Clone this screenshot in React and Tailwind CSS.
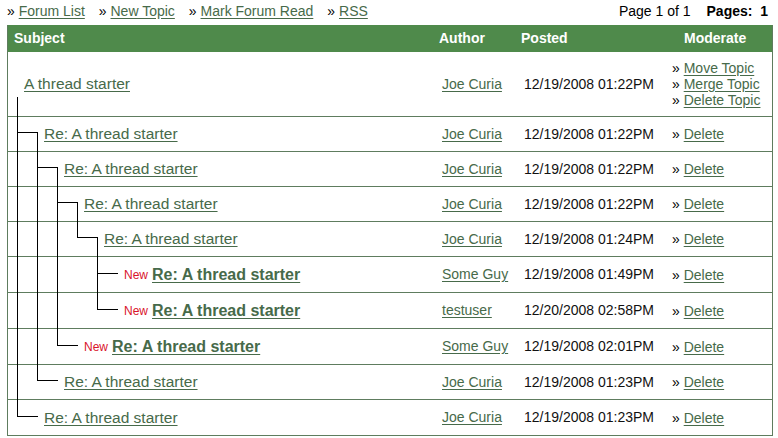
import React from "react";

const posts = [
  { level: 0, title: "A thread starter", author: "Joe Curia", posted: "12/19/2008 01:22PM" },
  { level: 1, title: "Re: A thread starter", author: "Joe Curia", posted: "12/19/2008 01:22PM" },
  { level: 2, title: "Re: A thread starter", author: "Joe Curia", posted: "12/19/2008 01:22PM" },
  { level: 3, title: "Re: A thread starter", author: "Joe Curia", posted: "12/19/2008 01:22PM" },
  { level: 4, title: "Re: A thread starter", author: "Joe Curia", posted: "12/19/2008 01:24PM" },
  { level: 5, title: "Re: A thread starter", author: "Some Guy", posted: "12/19/2008 01:49PM", isNew: true },
  { level: 5, title: "Re: A thread starter", author: "testuser", posted: "12/20/2008 02:58PM", isNew: true },
  { level: 3, title: "Re: A thread starter", author: "Some Guy", posted: "12/19/2008 02:01PM", isNew: true },
  { level: 2, title: "Re: A thread starter", author: "Joe Curia", posted: "12/19/2008 01:23PM" },
  { level: 1, title: "Re: A thread starter", author: "Joe Curia", posted: "12/19/2008 01:23PM" },
];

// does the guide line at depth d keep going below row i?
const continues = (i, d) => {
  for (let j = i + 1; j < posts.length; j++) {
    if (posts[j].level <= d) return false;
    if (posts[j].level === d + 1) return true;
  }
  return false;
};

const linkCls = "text-[#476a4a] underline underline-offset-2";

const TreeLines = ({ i }) => {
  const { level } = posts[i];
  const hasChildren = posts[i + 1] && posts[i + 1].level === level + 1;
  const lines = [];

  for (let d = 0; d < level; d++) {
    const x = 9 + 20 * d;
    const more = continues(i, d);
    if (d < level - 1) {
      if (more)
        lines.push(
          <div key={"v" + d} className="absolute -top-px -bottom-px w-px bg-black" style={{ left: x }} />
        );
    } else {
      lines.push(
        <div
          key={"c" + d}
          className={`absolute -top-px w-px bg-black ${more ? "-bottom-px" : "bottom-[calc(50%+1px)]"}`}
          style={{ left: x }}
        />
      );
      lines.push(
        <div
          key={"h" + d}
          className="absolute top-[calc(50%-2px)] h-px w-[21px] bg-black"
          style={{ left: x }}
        />
      );
    }
  }

  if (hasChildren) {
    lines.push(
      <div
        key="start"
        className={`absolute -bottom-px w-px bg-black ${level === 0 ? "top-[45px]" : "top-[calc(50%-2px)]"}`}
        style={{ left: 9 + 20 * level }}
      />
    );
  }
  return lines;
};

const Row = ({ post, i }) => {
  const height = i === 0 ? "h-[65px]" : post.isNew ? "h-[36px]" : "h-[35px]";
  const last = i === posts.length - 1;
  return (
    <div
      className={`grid grid-cols-[427px_82px_151px_104px] ${height} ${
        last ? "" : "border-b border-[#5e7c5e]"
      }`}
    >
      <div className="relative flex items-center" style={{ paddingLeft: 16 + 20 * post.level }}>
        <TreeLines i={i} />
        {post.isNew && <span className="mr-[4px] text-[12px] text-[#d9142c]">New</span>}
        <a
          href="#"
          className={`${linkCls} ${post.isNew ? "text-[16px] font-bold" : "text-[15.5px]"}`}
        >
          {post.title}
        </a>
      </div>
      <div className="flex items-center pl-[7px]">
        <a href="#" className={linkCls}>
          {post.author}
        </a>
      </div>
      <div className="flex items-center pl-[7px] text-[#111]">{post.posted}</div>
      <div className="flex flex-col justify-center pl-[4px] leading-[16px]">
        {(i === 0 ? ["Move Topic", "Merge Topic", "Delete Topic"] : ["Delete"]).map((label) => (
          <div key={label}>
            » <a href="#" className={linkCls}>{label}</a>
          </div>
        ))}
      </div>
    </div>
  );
};

export default function App() {
  return (
    <div className="h-[438px] w-[778px] bg-white font-['Liberation_Sans',Arial,sans-serif] text-[14px] text-black">
      <div className="flex h-[25px] items-center justify-between pb-[3px] pl-[7px] pr-[10px]">
        <div className="flex gap-[14px]">
          {["Forum List", "New Topic", "Mark Forum Read", "RSS"].map((label) => (
            <span key={label}>
              » <a href="#" className={linkCls}>{label}</a>
            </span>
          ))}
        </div>
        <div className="flex gap-[16px]">
          <span>Page 1 of 1</span>
          <span className="font-bold">Pages:&nbsp; 1</span>
        </div>
      </div>

      <div className="ml-[7px] w-[766px] border-x border-b border-[#5e7c5e]">
        <div className="grid h-[27px] grid-cols-[427px_82px_151px_104px] items-center bg-[#4f8a4b] font-bold text-white">
          <div className="pl-[6px]">Subject</div>
          <div className="pl-[4px]">Author</div>
          <div className="pl-[4px]">Posted</div>
          <div className="pl-[16px]">Moderate</div>
        </div>
        {posts.map((post, i) => (
          <Row key={i} post={post} i={i} />
        ))}
      </div>
    </div>
  );
}
